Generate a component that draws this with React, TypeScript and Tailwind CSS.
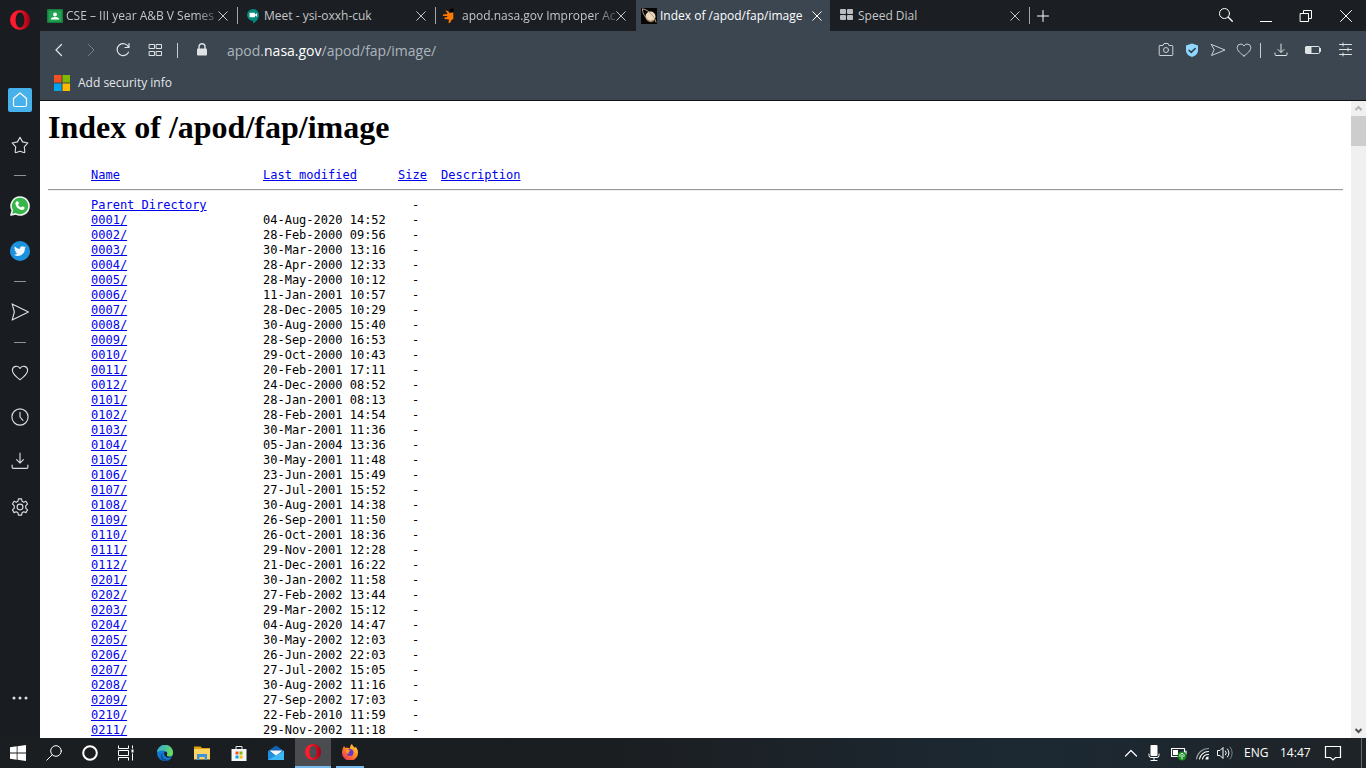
import type { ReactNode } from 'react';

const UI_FONT = "font-['Open_Sans','Noto_Sans',sans-serif]";

type Entry = [name: string, modified: string];

const ENTRIES: Entry[] = [
  ['0001/', '04-Aug-2020 14:52'],
  ['0002/', '28-Feb-2000 09:56'],
  ['0003/', '30-Mar-2000 13:16'],
  ['0004/', '28-Apr-2000 12:33'],
  ['0005/', '28-May-2000 10:12'],
  ['0006/', '11-Jan-2001 10:57'],
  ['0007/', '28-Dec-2005 10:29'],
  ['0008/', '30-Aug-2000 15:40'],
  ['0009/', '28-Sep-2000 16:53'],
  ['0010/', '29-Oct-2000 10:43'],
  ['0011/', '20-Feb-2001 17:11'],
  ['0012/', '24-Dec-2000 08:52'],
  ['0101/', '28-Jan-2001 08:13'],
  ['0102/', '28-Feb-2001 14:54'],
  ['0103/', '30-Mar-2001 11:36'],
  ['0104/', '05-Jan-2004 13:36'],
  ['0105/', '30-May-2001 11:48'],
  ['0106/', '23-Jun-2001 15:49'],
  ['0107/', '27-Jul-2001 15:52'],
  ['0108/', '30-Aug-2001 14:38'],
  ['0109/', '26-Sep-2001 11:50'],
  ['0110/', '26-Oct-2001 18:36'],
  ['0111/', '29-Nov-2001 12:28'],
  ['0112/', '21-Dec-2001 16:22'],
  ['0201/', '30-Jan-2002 11:58'],
  ['0202/', '27-Feb-2002 13:44'],
  ['0203/', '29-Mar-2002 15:12'],
  ['0204/', '04-Aug-2020 14:47'],
  ['0205/', '30-May-2002 12:03'],
  ['0206/', '26-Jun-2002 22:03'],
  ['0207/', '27-Jul-2002 15:05'],
  ['0208/', '30-Aug-2002 11:16'],
  ['0209/', '27-Sep-2002 17:03'],
  ['0210/', '22-Feb-2010 11:59'],
  ['0211/', '29-Nov-2002 11:18'],
];

interface IconProps {
  size?: number;
  box?: number;
  className?: string;
  children: ReactNode;
}

/** Thin line icon; box is the side of the view box, in drawing units */
const Icon = ({ size = 16, box = 16, className = '', children }: IconProps) => (
  <svg
    width={size}
    height={size}
    viewBox={`0 0 ${box} ${box}`}
    fill="none"
    stroke="currentColor"
    strokeLinecap="round"
    strokeLinejoin="round"
    aria-hidden="true"
    className={`shrink-0 ${className}`}
  >
    {children}
  </svg>
);

const CloseIcon = () => (
  <Icon size={10} box={10}>
    <path d="M.7.7l8.6 8.6M9.3.7L.7 9.3" />
  </Icon>
);

const OperaLogo = ({ size }: { size: number }) => (
  <Icon size={size} box={20}>
    <defs>
      <linearGradient id="operaRing" x1="0" x2="1">
        <stop offset=".3" stopColor="#ff1b2d" />
        <stop offset="1" stopColor="#a70014" />
      </linearGradient>
    </defs>
    <path
      fill="url(#operaRing)"
      stroke="none"
      fillRule="evenodd"
      d="M10 0a10 10 0 1 0 0 20a10 10 0 0 0 0-20zM10 2.4c2.6 0 4.4 3.3 4.4 7.6s-1.8 7.6-4.4 7.6S5.6 14.3 5.6 10S7.4 2.4 10 2.4z"
    />
  </Icon>
);

const HeartPath = () => (
  <path d="M8 14C4.500 11.300 1.200 8.800 1.200 5.500A3.600 3.600 0 0 1 8 4a3.600 3.600 0 0 1 6.800 1.500C14.800 8.800 11.500 11.300 8 14z" />
);

const SendPath = () => <path d="M1.500 2.500L15 8L1.500 13.500L4 8z" />;

const DownloadPath = () => (
  <path d="M8 1v8.500M5 6.800l3 3l3-3M1 11.500v2a1 1 0 0 0 1 1h12a1 1 0 0 0 1-1v-2" />
);

/* ---------- tab strip ---------- */

const ClassroomIcon = () => (
  <Icon>
    <rect x="0" y="1" width="16" height="14" rx="1" fill="#15803d" stroke="none" />
    <rect x="1.500" y="2.500" width="13" height="11" fill="#23a455" stroke="none" />
    <g fill="#fff" stroke="none">
      <circle cx="8" cy="6.500" r="1.900" />
      <path d="M3.800 11.500c0-3.200 8.400-3.200 8.400 0z" />
    </g>
  </Icon>
);

const MeetIcon = () => (
  <Icon>
    <g stroke="none">
      <path fill="#00897b" d="M8 1a6 6 0 0 1 6 6c0 4-3 6.800-6 8.500V13A6 6 0 0 1 8 1z" />
      <rect x="4.500" y="4.800" width="5.500" height="4.500" rx=".6" fill="#fff" />
      <path fill="#fff" d="M9.500 7l2.600-2v4z" />
    </g>
  </Icon>
);

const RunnerIcon = () => (
  <Icon>
    <g stroke="none">
      <path
        fill="#ff7900"
        d="M2 2.500l3 .5l1.500 2l3.800-.5V11l-1.800 1L7 15H5.500l.5-3.500L1.500 11V9.500l3-.5L4 8H0V6.500L4.500 6L4 4.500z"
      />
      <path fill="#000" d="M6.500 1.500L10.500 0v3.500l-3 .5z" />
    </g>
  </Icon>
);

const SaturnIcon = () => (
  <Icon>
    <rect width="16" height="16" fill="#070504" stroke="none" />
    <circle cx="9.500" cy="8.500" r="5" fill="#ead9bc" stroke="none" />
    <path d="M6.500 12a5 5 0 0 0 6 .5" stroke="#9c7d58" strokeWidth="1.500" />
    <path d="M1.500 1c4-.5 12 6.500 13.500 13M1.500 1c-.5 3 2 7.500 4.500 9.500" stroke="#b79c86" />
  </Icon>
);

const DialIcon = () => (
  <Icon>
    <g fill="#b9bcc0" stroke="none">
      <rect x="1" y="1" width="6" height="5" rx="1" />
      <rect x="8" y="1" width="6" height="5" rx="1" />
      <rect x="1" y="7" width="6" height="5" rx="1" />
      <rect x="8" y="7" width="6" height="5" rx="1" />
    </g>
  </Icon>
);

interface TabProps {
  title: string;
  icon: ReactNode;
  active?: boolean;
  divider?: boolean;
  fade?: boolean;
}

const Tab = ({ title, icon, active, divider, fade }: TabProps) => (
  <div
    className={`relative flex items-center ${
      active
        ? 'mx-0.5 w-[194px] bg-[#3b4651] pr-2 pl-[5px] text-white'
        : 'w-[198px] pr-2.5 pl-[7px] text-[#c4c7ca]'
    }`}
  >
    <button type="button" className="flex flex-1 items-center gap-[3px] text-left">
      {icon}
      <span
        className={`flex-1 text-[12px] whitespace-nowrap ${
          fade ? '[mask-image:linear-gradient(to_right,black_85%,#0004)]' : ''
        }`}
      >
        {title}
      </span>
    </button>
    <button type="button" aria-label={`Close ${title}`} className="shrink-0">
      <CloseIcon />
    </button>
    {divider && <span className="absolute top-[7px] right-0 h-[17px] w-px bg-[#a3a7ab]" />}
  </div>
);

const TabStrip = () => (
  <header className="flex h-[31px] shrink-0 bg-[#1b1e22] text-white">
    <Tab title="CSE – III year A&B V Semes" icon={<ClassroomIcon />} divider fade />
    <Tab title="Meet - ysi-oxxh-cuk" icon={<MeetIcon />} divider />
    <Tab title="apod.nasa.gov Improper Ac" icon={<RunnerIcon />} fade />
    <Tab title="Index of /apod/fap/image" icon={<SaturnIcon />} active />
    <Tab title="Speed Dial" icon={<DialIcon />} divider />
    <button type="button" aria-label="New tab" className="ml-[7px]">
      <Icon size={12} box={12}>
        <path d="M6 .5v11M.5 6h11" />
      </Icon>
    </button>
    <div className="ml-auto flex items-center gap-6 pr-3">
      <button type="button" aria-label="Search tabs">
        <Icon>
          <circle cx="6.500" cy="5.500" r="5" />
          <path d="M10.300 9.200l4 4" strokeWidth="1.300" />
        </Icon>
      </button>
      <button type="button" aria-label="Minimize">
        <Icon>
          <path d="M2 13.500h12" strokeLinecap="butt" />
        </Icon>
      </button>
      <button type="button" aria-label="Restore">
        <Icon>
          <path d="M2.500 5.500h8v8h-8zM5.500 5V2.500h8v8H11" />
        </Icon>
      </button>
      <button type="button" aria-label="Close window">
        <Icon>
          <path d="M2.500 2.500l11 11M13.500 2.500l-11 11" />
        </Icon>
      </button>
    </div>
  </header>
);

/* ---------- address bar ---------- */

const Toolbar = () => (
  <div className="shrink-0 border-b border-[#111315] bg-[#3b4651] text-[#dfe3e6]">
    <div className="flex h-[38px] items-center pr-[13px] pl-[11px]">
      <div className="flex items-center gap-4">
        <button type="button" aria-label="Back">
          <Icon>
            <path d="M10.500 2.500L5 8l5.500 5.500" strokeWidth="1.300" />
          </Icon>
        </button>
        <button type="button" aria-label="Forward" className="text-[#78818a]">
          <Icon>
            <path d="M5.500 2.500L11 8l-5.500 5.500" />
          </Icon>
        </button>
        <button type="button" aria-label="Reload">
          <Icon>
            <path d="M13.500 10.200A6 6 0 1 1 13.500 5M14 1.500v4h-4" strokeWidth="1.200" />
          </Icon>
        </button>
        <button type="button" aria-label="Speed dial">
          <Icon>
            <path d="M2.500 2.500h5v4h-5zM9.500 2.500h5v4h-5zM2.500 9.500h5v4h-5zM9.500 9.500h5v4h-5z" />
          </Icon>
        </button>
      </div>
      <span className="ml-[14px] h-[15px] w-px bg-[#c9cdd1]" />
      <Icon className="ml-4">
        <rect x="3" y="6.500" width="10" height="7" rx="1" fill="currentColor" stroke="none" />
        <path d="M5 7V4.700a3 3 0 0 1 6 0V7" strokeWidth="1.400" />
      </Icon>
      <p className="ml-[17px] flex-1 text-[14px] text-[#adb5bc]">
        apod.<span className="text-white">nasa.gov</span>/apod/fap/image/
      </p>
      <div className="flex items-center gap-2.5 text-[#cdd1d5]">
        <button type="button" aria-label="Snapshot">
          <Icon>
            <path d="M2 3.500h3l1-2h4l1 2h3a.8.8 0 0 1 .8.800v8.400a.8.8 0 0 1-.8.800H2a.8.8 0 0 1-.8-.8V4.300a.8.8 0 0 1 .8-.8z" />
            <circle cx="8" cy="8" r="2.500" />
          </Icon>
        </button>
        <button type="button" aria-label="Protection">
          <Icon>
            <path fill="#8fd7ff" stroke="none" d="M8 1.500l6 2v5c0 3.500-3 5.500-6 6.500c-3-1-6-3-6-6.500v-5z" />
            <path d="M5 8.200l2.200 2.200L11.200 6.500" stroke="#2f3a45" strokeWidth="1.500" />
          </Icon>
        </button>
        <button type="button" aria-label="My Flow">
          <Icon>
            <SendPath />
          </Icon>
        </button>
        <button type="button" aria-label="Add to favourites">
          <Icon>
            <HeartPath />
          </Icon>
        </button>
      </div>
      <span className="ml-2 h-[15px] w-px bg-[#c9cdd1]" />
      <div className="ml-3 flex items-center gap-4">
        <button type="button" aria-label="Downloads">
          <Icon>
            <path d="M8 2v8M5 7.500l3 3l3-3M2 11v1.500a1 1 0 0 0 1 1h10a1 1 0 0 0 1-1V11" />
          </Icon>
        </button>
        <button type="button" aria-label="Battery saver">
          <Icon>
            <rect x=".5" y="4.500" width="14" height="7" rx="1" />
            <path d="M1 5h5v6H1z" fill="currentColor" />
            <path d="M15.500 6.500v3" />
          </Icon>
        </button>
        <button type="button" aria-label="Easy setup">
          <Icon>
            <path d="M2.500 2.500h12M2.500 7.500h12M2.500 12.500h12M6 1v3M11 6v3M6 11v3" />
          </Icon>
        </button>
      </div>
    </div>
    <div className="flex h-[31px] items-start px-3.5 pt-[5px]">
      <a href="#security" className="flex items-center gap-2 text-[12px] text-[#e4e7ea]">
        <svg width="16" height="16" viewBox="0 0 16 16" aria-hidden="true">
          <path fill="#f25022" d="M0 0h7.500v7.500H0z" />
          <path fill="#7fba00" d="M8.500 0H16v7.500H8.500z" />
          <path fill="#00a4ef" d="M0 8.500h7.500V16H0z" />
          <path fill="#ffb900" d="M8.500 8.500H16V16H8.500z" />
        </svg>
        Add security info
      </a>
    </div>
  </div>
);

/* ---------- sidebar ---------- */

const SidebarDash = () => <span className="h-px w-3 bg-[#8b949c]" />;

const Sidebar = () => (
  <nav className="flex w-10 shrink-0 flex-col items-center bg-[#191c20] pt-2.5 text-[#dcdfe2]">
    <button type="button" aria-label="Opera menu">
      <OperaLogo size={20} />
    </button>
    <button
      type="button"
      aria-label="Home"
      className="mt-[58px] flex size-6 items-center justify-center rounded-xs bg-[#46b1ea] text-white"
    >
      <Icon>
        <path d="M8 1L14.500 6.500V13a1.500 1.500 0 0 1-1.500 1.500H3A1.500 1.500 0 0 1 1.500 13V6.500z" strokeWidth="1.200" />
      </Icon>
    </button>
    <button type="button" aria-label="Bookmarks" className="mt-6">
      <Icon size={18}>
        <path d="M8 1.200l2.300 4l4.700 1l-3.200 3.500l.5 4.500a.8.8 0 0 1-1 .500L8 13.500l-3.300 1.200a.8.8 0 0 1-1-.5l.5-4.500L1 6.200l4.700-1z" />
      </Icon>
    </button>
    <div className="mt-[21px] mb-5 flex">
      <SidebarDash />
    </div>
    <button type="button" aria-label="WhatsApp">
      <Icon size={20} box={20}>
        <path
          d="M10 1a9 9 0 1 1-4.300 16.900L1 19l1.300-4.500A9 9 0 0 1 10 1z"
          fill="#36b54a"
          stroke="#f3f5f3"
          strokeWidth="1.600"
        />
        <path
          fill="#fff"
          stroke="none"
          d="M7 5.300l1.200.2l.8 2l-.9 1.300c.7 1.300 1.600 2.200 3 2.800l1.200-1.300l2.200 1c.2 1.800-1 2.900-2.800 2.700C8.500 13.500 6 11 5.400 8c-.1-1.300.7-2.500 1.600-2.700z"
        />
      </Icon>
    </button>
    <button type="button" aria-label="Twitter" className="mt-[25px]">
      <Icon size={20} box={20}>
        <circle cx="10" cy="10" r="10" fill="#1c91dd" stroke="none" />
        <path
          fill="#f4f8fb"
          stroke="none"
          d="M16 6.200c-.5.200-.9.300-1.400.400c.5-.3.900-.8 1.100-1.300c-.5.300-1 .5-1.600.600a2.500 2.500 0 0 0-4.200 2.200A7 7 0 0 1 4.800 5.500a2.500 2.500 0 0 0 .8 3.300c-.4 0-.8-.1-1.100-.3a2.500 2.500 0 0 0 2 2.400c-.4.100-.8.100-1.100 0a2.500 2.500 0 0 0 2.300 1.700A5 5 0 0 1 4 13.700a7 7 0 0 0 10.800-6.300c.5-.3.900-.7 1.200-1.200z"
        />
      </Icon>
    </button>
    <div className="mt-5 mb-[21px] flex">
      <SidebarDash />
    </div>
    <button type="button" aria-label="My Flow">
      <Icon size={18}>
        <path d="M1 .8L15.500 8L1 15.200L3 8z" />
      </Icon>
    </button>
    <div className="mt-[21px] mb-[21px] flex">
      <SidebarDash />
    </div>
    <button type="button" aria-label="Favourites">
      <Icon size={18}>
        <HeartPath />
      </Icon>
    </button>
    <button type="button" aria-label="History" className="mt-[26px]">
      <Icon size={18}>
        <circle cx="8" cy="8" r="7.200" />
        <path d="M8 3.800V8l2.600 3" />
      </Icon>
    </button>
    <button type="button" aria-label="Downloads" className="mt-[26px]">
      <Icon size={18}>
        <DownloadPath />
      </Icon>
    </button>
    <button type="button" aria-label="Settings" className="mt-7">
      <Icon size={18}>
        <circle cx="8" cy="8" r="2.600" />
        <path d="M6.600.8h2.800l.4 2.100l1.500.8l2-.8l1.400 2.400L13.100 7v2l1.600 1.500l-1.400 2.500l-2-.8l-1.500.9l-.4 2.100H6.600l-.4-2.100l-1.500-.9l-2 .8l-1.400-2.500L2.900 9V7L1.300 5.300l1.400-2.400l2 .8l1.500-.8z" />
      </Icon>
    </button>
    <button type="button" aria-label="More" className="mt-auto mb-8">
      <Icon>
        <g fill="currentColor" stroke="none">
          <circle cx="2" cy="8" r="1.500" />
          <circle cx="8" cy="8" r="1.500" />
          <circle cx="14" cy="8" r="1.500" />
        </g>
      </Icon>
    </button>
  </nav>
);

/* ---------- directory listing ---------- */

const ListingLink = ({ children }: { children: ReactNode }) => (
  <a href="#listing" className="text-[#0000ee] underline">
    {children}
  </a>
);

const Listing = () => (
  <main className="min-w-0 flex-1 overflow-hidden bg-white px-2 pt-2 text-black">
    <h1 className="font-['Liberation_Serif',serif] text-[32px] leading-[37px] font-bold">
      Index of /apod/fap/image
    </h1>
    <table className="mt-[22px] w-full table-fixed text-left font-['DejaVu_Sans_Mono',monospace] text-[12px] leading-[15px] whitespace-nowrap">
      <colgroup>
        <col className="w-[43px]" />
        <col className="w-[172px]" />
        <col className="w-[135px]" />
        <col className="w-[43px]" />
        <col />
      </colgroup>
      <thead>
        <tr>
          <td />
          <th className="font-normal">
            <ListingLink>Name</ListingLink>
          </th>
          <th className="font-normal">
            <ListingLink>Last modified</ListingLink>
          </th>
          <th className="font-normal">
            <ListingLink>Size</ListingLink>
          </th>
          <th className="font-normal">
            <ListingLink>Description</ListingLink>
          </th>
        </tr>
        <tr>
          <td colSpan={5} className="pt-[6px] pb-[7px]">
            <hr className="h-0.5 border-t border-b border-t-[#9a9a9a] border-b-[#eeeeee]" />
          </td>
        </tr>
      </thead>
      <tbody>
        <tr>
          <td />
          <td>
            <ListingLink>Parent Directory</ListingLink>
          </td>
          <td />
          <td className="pl-3.5">-</td>
          <td />
        </tr>
        {ENTRIES.map(([name, modified]) => (
          <tr key={name}>
            <td />
            <td>
              <ListingLink>{name}</ListingLink>
            </td>
            <td>{modified}</td>
            <td className="pl-3.5">-</td>
            <td />
          </tr>
        ))}
      </tbody>
    </table>
  </main>
);

const Scrollbar = () => (
  <div className="flex w-[15px] shrink-0 flex-col items-center bg-[#f0f0f0]">
    <Icon size={15} box={15} className="text-[#b5b5b5]">
      <path d="M4.500 9l3-3l3 3" strokeWidth="2" strokeLinecap="butt" strokeLinejoin="miter" />
    </Icon>
    <span className="h-[30px] w-full bg-[#cdcdcd]" />
    <Icon size={15} box={15} className="mt-auto text-[#505050]">
      <path d="M4.500 6l3 3l3-3" strokeWidth="2" strokeLinecap="butt" strokeLinejoin="miter" />
    </Icon>
  </div>
);

/* ---------- taskbar ---------- */

const EdgeIcon = () => (
  <Icon>
    <defs>
      <linearGradient id="edgeTop" x1="0" x2="1" y2=".5">
        <stop stopColor="#2aa5e4" />
        <stop offset="1" stopColor="#6bdc5a" />
      </linearGradient>
    </defs>
    <g stroke="none">
      <circle cx="8" cy="8" r="8" fill="#1378cf" />
      <path fill="url(#edgeTop)" d="M0 7.500A8 8 0 0 1 16 8c0 2.500-2 3.600-4 3.500c-2 0-2.800-.8-2.300-1.500C11.500 7.500 9 5.500 6 5.500S.5 6.500 0 7.500z" />
      <path fill="#0c4fa0" d="M5.500 8c-1.500 4 2 7.500 7 7c-2 1.300-5.500 1.300-7.500-.5S3.500 9.500 5.500 8z" />
      <path fill="#1b1e22" d="M9.700 10c1.300-1.800 0-3.300-1.800-3.300c-2 2.300.3 6.300 4.600 5.800c1.500-.2 2.300-.7 3-1.300c-2.500 1-6.300.5-5.800-1.200z" />
    </g>
  </Icon>
);

const FolderIcon = () => (
  <Icon>
    <g stroke="none">
      <path fill="#e0a010" d="M0 1.500h6.500l1.500 1.500h8v3H0z" />
      <path fill="#fcd462" d="M0 4h16v10.500H0z" />
      <path fill="#3f93dc" d="M3 9h10v6h-2.500v-3h-5v3H3z" />
    </g>
  </Icon>
);

const StoreIcon = () => (
  <Icon>
    <path d="M5 4V1.500h6V4" stroke="#e8e8e8" />
    <g stroke="none">
      <path fill="#f5f5f5" d="M.5 4h15v12H.5z" />
      <path fill="#f25022" d="M4.500 6.500h3v3h-3z" />
      <path fill="#7fba00" d="M8.500 6.500h3v3h-3z" />
      <path fill="#00a4ef" d="M4.500 10.500h3v3h-3z" />
      <path fill="#ffb900" d="M8.500 10.500h3v3h-3z" />
    </g>
  </Icon>
);

const MailIcon = () => (
  <Icon>
    <g stroke="none">
      <path fill="#0f62b4" d="M0 6l8-5.500L16 6v9H0z" />
      <path fill="#f6f6f6" d="M1.500 5.500h13L8 11z" />
      <path fill="#1f8fe0" d="M0 5.500l8 5.500L0 15z" />
      <path fill="#3bb8f3" d="M16 5.500L0 15h16z" />
    </g>
  </Icon>
);

const FirefoxIcon = () => (
  <Icon>
    <defs>
      <linearGradient id="foxFlame" x1="1" x2=".2" y2="1">
        <stop stopColor="#ffe24a" />
        <stop offset=".5" stopColor="#ff8a1f" />
        <stop offset="1" stopColor="#f0305c" />
      </linearGradient>
    </defs>
    <g stroke="none">
      <path
        fill="url(#foxFlame)"
        d="M2 2l1.500 2L5 3.500C6 4 7 4.300 8 4.500C7.800 3 8.500 1 10 0c.5 2 2 2.800 3.200 4V2.500C15 4 16 6 16 8.500A8 8 0 0 1 0 9c0-3 .8-5 2-7z"
      />
      <circle cx="8" cy="8.500" r="3.500" fill="#6c35c9" />
      <path fill="#ff9a24" d="M3.500 6c2-1 3.800-.3 4.700.8L6.500 8.200L7 10L4.500 9.500z" />
    </g>
  </Icon>
);

const TaskButton = ({ label, children }: { label: string; children: ReactNode }) => (
  <button type="button" aria-label={label} className="flex w-9 items-center justify-center">
    {children}
  </button>
);

const Taskbar = () => (
  <footer className="flex h-[30px] shrink-0 bg-linear-to-r from-[#1b1e21] from-45% via-[#1c2933] via-75% to-[#1e2327] text-white">
    <TaskButton label="Start">
      <Icon>
        <path
          fill="#fff"
          stroke="none"
          d="M0 2.300l6.700-1v6.300H0zM7.500 1.200L16 0v7.600H7.500zM0 8.400h6.700v6.300L0 13.700zM7.500 8.400H16V16l-8.500-1.200z"
        />
      </Icon>
    </TaskButton>
    <TaskButton label="Search">
      <Icon>
        <circle cx="10" cy="6" r="5.300" />
        <path d="M6.200 9.800L.8 15.200" />
      </Icon>
    </TaskButton>
    <TaskButton label="Cortana">
      <Icon>
        <circle cx="8" cy="8" r="6.800" strokeWidth="2" />
      </Icon>
    </TaskButton>
    <TaskButton label="Task view">
      <Icon>
        <path d="M.5.500V3.500h10V.5M.5 15.500v-3h10v3M.5 5.500h10v5H.5zM14.500.5v3M14.500 8.500v7" strokeLinecap="butt" />
        <path d="M13.500 4.500h2v3h-2z" fill="#fff" stroke="none" />
      </Icon>
    </TaskButton>
    <div className="ml-[3px] flex gap-px">
      <TaskButton label="Microsoft Edge">
        <EdgeIcon />
      </TaskButton>
      <TaskButton label="File Explorer">
        <FolderIcon />
      </TaskButton>
      <TaskButton label="Microsoft Store">
        <StoreIcon />
      </TaskButton>
      <TaskButton label="Mail">
        <MailIcon />
      </TaskButton>
      <div className="flex border-b-2 border-[#76b9ed] bg-[#4a4c50]">
        <TaskButton label="Opera">
          <OperaLogo size={16} />
        </TaskButton>
      </div>
      <div className="flex flex-col">
        <div className="flex flex-1">
          <TaskButton label="Firefox">
            <FirefoxIcon />
          </TaskButton>
        </div>
        <span className="mx-1 h-0.5 bg-[#76b9ed]" />
      </div>
    </div>
    <div className="ml-auto flex items-center pr-1">
      <button type="button" aria-label="Show hidden icons">
        <Icon size={14} box={14}>
          <path d="M1.500 10L7 4.500L12.500 10" strokeWidth="1.200" />
        </Icon>
      </button>
      <button type="button" aria-label="Microphone" className="ml-2">
        <Icon>
          <rect x="4.500" y="0" width="7" height="11" rx="1" fill="#fff" stroke="none" />
          <path d="M3 9v1.500a2 2 0 0 0 2 2h6a2 2 0 0 0 2-2V9M8 12.500v3M5 15.500h6" />
        </Icon>
      </button>
      <button type="button" aria-label="Battery" className="ml-[9px]">
        <Icon>
          <path d="M.5 3.500h13v8H.5zM15 6v3" strokeWidth="1.200" />
          <path d="M2 5h5v5H2z" fill="#fff" stroke="none" />
          <circle cx="11" cy="11" r="4.500" fill="#128a1c" stroke="none" />
          <path d="M11 14v-4M9 11.500a2.200 2.200 0 1 1 4 0" />
        </Icon>
      </button>
      <button type="button" aria-label="Wi-Fi" className="ml-2">
        <Icon>
          <g strokeWidth="1.100">
            <path d="M1.500 14A12 12 0 0 1 13.500 3.500" stroke="#9a9da0" />
            <path d="M4.500 14A9 9 0 0 1 13.500 6.500M7.500 14a6 6 0 0 1 6-4.500" />
          </g>
          <path d="M10.500 14.500a3 3 0 0 1 3-3v3z" fill="#fff" stroke="none" />
        </Icon>
      </button>
      <button type="button" aria-label="Volume" className="ml-[6px]">
        <Icon>
          <path d="M.8 5.500H3L6 2.500v11L3 10.500H.8zM8.500 6a3 3 0 0 1 0 4M10.500 4a6 6 0 0 1 0 8" />
          <path d="M13 2a9 9 0 0 1 0 12" stroke="#7c8084" />
        </Icon>
      </button>
      <button type="button" className="ml-[11px] w-9 text-left text-[12px]">
        ENG
      </button>
      <button type="button" className="w-[44px] text-left text-[12px]">
        14:47
      </button>
      <button type="button" aria-label="Notifications">
        <Icon size={18} box={18}>
          <path d="M1.500 2.500h15v11h-5L9 16l-2.500-2.500h-5z" strokeWidth="1.200" strokeLinejoin="miter" />
        </Icon>
      </button>
      <span className="ml-[19px] h-[30px] w-px bg-[#65696d]" />
    </div>
  </footer>
);

const App = () => (
  <div className={`flex h-screen flex-col overflow-hidden ${UI_FONT}`}>
    <div className="flex min-h-0 flex-1">
      <Sidebar />
      <div className="flex min-w-0 flex-1 flex-col">
        <TabStrip />
        <Toolbar />
        <div className="flex min-h-0 flex-1">
          <Listing />
          <Scrollbar />
        </div>
      </div>
    </div>
    <Taskbar />
  </div>
);

export default App;
